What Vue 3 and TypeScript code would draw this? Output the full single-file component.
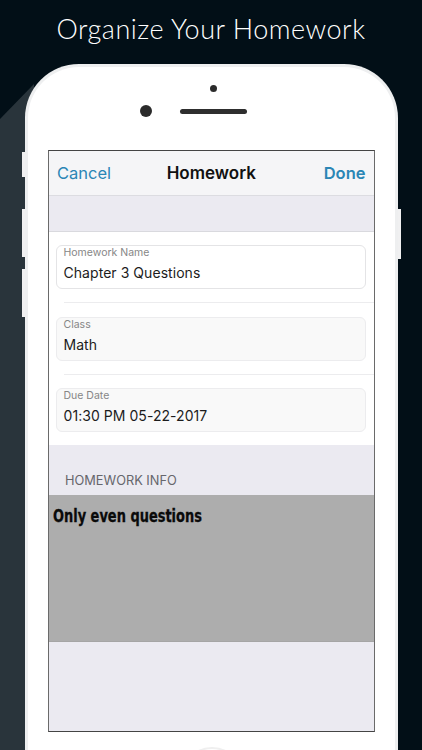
<script setup lang="ts">
interface Field {
  label: string
  value: string
  disabled: boolean
}

const fields: Field[] = [
  { label: 'Homework Name', value: 'Chapter 3 Questions', disabled: false },
  { label: 'Class', value: 'Math', disabled: true },
  { label: 'Due Date', value: '01:30 PM 05-22-2017', disabled: true },
]
</script>

<template>
  <main class="page">
    <svg class="shadow" width="422" height="750" viewBox="0 0 422 750" aria-hidden="true">
      <polygon points="0,119 34,84 34,750 0,750" fill="#29343b" />
    </svg>
    <h1 class="title">Organize Your Homework</h1>
    <div class="device">
      <span class="side side-a"></span>
      <span class="side side-b"></span>
      <span class="side side-c"></span>
      <span class="side side-d"></span>
      <div class="body">
        <div class="sensors">
          <span class="dot"></span>
          <div class="speaker-row">
            <span class="camera"></span>
            <span class="speaker"></span>
          </div>
        </div>
        <section class="screen">
          <header class="nav">
            <span class="nav-btn">Cancel</span>
            <span class="nav-title">Homework</span>
            <span class="nav-btn done">Done</span>
          </header>
          <div class="gap-band"></div>
          <div class="form">
            <template v-for="(f, i) in fields" :key="f.label">
              <div class="field" :class="{ disabled: f.disabled }">
                <span class="label">{{ f.label }}</span>
                <span class="value">{{ f.value }}</span>
              </div>
              <div v-if="i < fields.length - 1" class="sep"></div>
            </template>
          </div>
          <div class="section-head">HOMEWORK INFO</div>
          <div class="note"><span class="note-text">Only even questions</span></div>
          <div class="rest"></div>
        </section>
        <span class="home"></span>
      </div>
    </div>
  </main>
</template>

<style>
html,
body {
  margin: 0;
  background: #020f17;
}
</style>

<style scoped>
.page {
  position: relative;
  width: 422px;
  height: 750px;
  overflow: hidden;
  background: #020f17;
  font-family: Inter, Roboto, "Liberation Sans", sans-serif;
}
.shadow {
  position: absolute;
  left: 0;
  top: 0;
}
.title {
  position: relative;
  margin: 0;
  height: 64px;
  padding-top: 12px;
  box-sizing: border-box;
  text-align: center;
  font-family: Lato, "Open Sans", sans-serif;
  font-weight: 300;
  font-size: 27px;
  line-height: 34px;
  letter-spacing: 0.5px;
  color: #fff;
}
.device {
  position: relative;
  width: 373px;
  margin-left: 25px;
}
.side {
  position: absolute;
  width: 3px;
  background: #f0f0f1;
}
.side-a { left: -3px; top: 88px; height: 25px; }
.side-b { left: -3px; top: 145px; height: 48px; }
.side-c { left: -3px; top: 205px; height: 48px; }
.side-d { right: -3px; top: 145px; height: 50px; }
.body {
  position: relative;
  box-sizing: border-box;
  height: 760px;
  padding: 0 20px;
  background: #fff;
  border: 3px solid #eeeff0;
  border-radius: 54px 54px 0 0;
  border-bottom: 0;
}
.sensors {
  height: 83px;
  position: relative;
}
.dot {
  position: absolute;
  left: 162px;
  top: 18px;
  width: 7px;
  height: 7px;
  border-radius: 50%;
  background: #2b2b2b;
}
.speaker-row {
  position: absolute;
  left: 92px;
  top: 38px;
  display: flex;
  align-items: center;
  gap: 28px;
}
.camera {
  width: 12px;
  height: 12px;
  border-radius: 50%;
  background: #2b2b2b;
}
.speaker {
  width: 67px;
  height: 5px;
  border-radius: 3px;
  background: #2e2e2e;
}
.screen {
  display: flex;
  flex-direction: column;
  box-sizing: border-box;
  width: 326.5px;
  height: 582px;
  border: 1px solid #6a6a6a;
  border-top-color: #444;
  border-bottom-color: #444;
  background: #ebeaf1;
}
.nav {
  display: grid;
  grid-template-columns: 1fr auto 1fr;
  align-items: center;
  height: 44px;
  padding: 0 8px;
  background: #f5f5f7;
  border-bottom: 1px solid #dcdce1;
  font-size: 16.5px;
}
.nav-btn {
  color: #2b86b5;
}
.done {
  font-weight: 600;
  text-align: right;
}
.nav-title {
  font-size: 17px;
  font-weight: 600;
  color: #111;
}
.gap-band {
  height: 35px;
  background: #ebeaf1;
  border-bottom: 1px solid #d9d9de;
}
.form {
  display: flex;
  flex-direction: column;
  height: 213px;
  box-sizing: border-box;
  padding: 13px 0 0 7px;
  background: #fff;
}
.field {
  display: flex;
  flex-direction: column;
  box-sizing: border-box;
  width: 310px;
  height: 44px;
  padding: 0 6.5px;
  border: 1px solid #e4e4e6;
  border-radius: 6px;
  background: #fff;
}
.field.disabled {
  background: #f9f9f9;
  border-color: #ececee;
}
.label {
  font-size: 10.5px;
  line-height: 13px;
  color: #868686;
}
.value {
  margin-top: 5px;
  font-size: 14px;
  line-height: 18px;
  letter-spacing: 0.05px;
  color: #1c1c1c;
}
.sep {
  height: 1px;
  margin: 13px 0 13.5px 8px;
  background: #ececee;
}
.section-head {
  height: 50px;
  box-sizing: border-box;
  padding: 27px 0 0 16px;
  font-size: 12.8px;
  line-height: 17px;
  color: #66666c;
}
.note {
  height: 147px;
  box-sizing: border-box;
  padding: 10px 0 0 4px;
  background: #adadad;
  border-bottom: 1px solid #a5a5a5;
}
.note-text {
  display: inline-block;
  transform: scaleX(0.8);
  transform-origin: left center;
  font-family: "DejaVu Sans", "Liberation Sans", sans-serif;
  font-stretch: condensed;
  font-weight: 700;
  font-size: 18px;
  line-height: 22px;
  color: #0a0a0a;
  -webkit-text-stroke: 0.3px #0a0a0a;
}
.rest {
  flex: 1;
}
.home {
  position: absolute;
  left: 152px;
  top: 680px;
  width: 64px;
  height: 64px;
  box-sizing: border-box;
  border: 2px solid #efefef;
  border-radius: 50%;
}
</style>
